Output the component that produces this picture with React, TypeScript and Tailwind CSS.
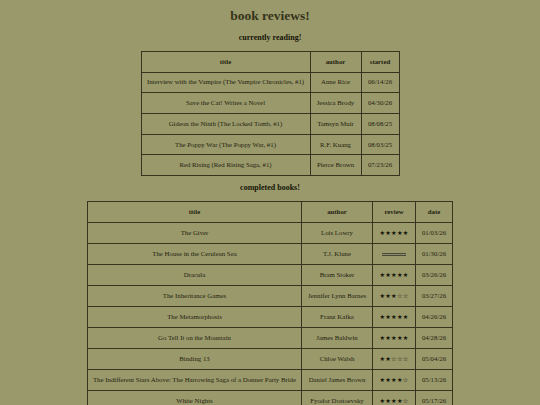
const reading = [
  { title: "Interview with the Vampire (The Vampire Chronicles, #1)", author: "Anne Rice", started: "06/14/26" },
  { title: "Save the Cat! Writes a Novel", author: "Jessica Brody", started: "04/30/26" },
  { title: "Gideon the Ninth (The Locked Tomb, #1)", author: "Tamsyn Muir", started: "08/08/25" },
  { title: "The Poppy War (The Poppy War, #1)", author: "R.F. Kuang", started: "08/03/25" },
  { title: "Red Rising (Red Rising Saga, #1)", author: "Pierce Brown", started: "07/23/26" },
];

const completed = [
  { title: "The Giver", author: "Lois Lowry", stars: 5, date: "01/03/26" },
  { title: "The House in the Cerulean Sea", author: "T.J. Klune", stars: -1, date: "01/30/26" },
  { title: "Dracula", author: "Bram Stoker", stars: 5, date: "03/26/26" },
  { title: "The Inheritance Games", author: "Jennifer Lynn Barnes", stars: 3, date: "03/27/26" },
  { title: "The Metamorphosis", author: "Franz Kafka", stars: 5, date: "04/26/26" },
  { title: "Go Tell It on the Mountain", author: "James Baldwin", stars: 5, date: "04/28/26" },
  { title: "Binding 13", author: "Chloe Walsh", stars: 2, date: "05/04/26" },
  { title: "The Indifferent Stars Above: The Harrowing Saga of a Donner Party Bride", author: "Daniel James Brown", stars: 4, date: "05/13/26" },
  { title: "White Nights", author: "Fyodor Dostoevsky", stars: 4, date: "05/17/26" },
];

const cell = "border border-[#35351f] px-[4px] py-0 text-center align-middle";

function Stars({ n }: { n: number }) {
  if (n < 0) {
    return <div className="mx-auto h-[3px] w-[24px] border-y border-[#4a4a38] bg-[#8d8c6a]" />;
  }
  return (
    <span className="text-[6.2px] tracking-[0.3px] text-[#141408] [font-family:'DejaVu_Sans',sans-serif]">
      {"★".repeat(n)}
      {"☆".repeat(5 - n)}
    </span>
  );
}

export default function App() {
  return (
    <div className="min-h-[405px] w-[540px] bg-[#9a996b] flex flex-col items-center pt-[7px] text-[#24230f] [font-family:'Liberation_Serif',serif]">
      <h1 className="text-[13.5px] leading-[18px] font-bold text-[#35341a]">book reviews!</h1>

      <h2 className="mt-[8px] text-[8px] leading-[10px] font-bold text-[#151408]">currently reading!</h2>
      <table className="mt-[8px] table-fixed border-collapse w-[258px] text-[6.8px]">
        <colgroup>
          <col className="w-[169px]" />
          <col className="w-[51px]" />
          <col className="w-[38px]" />
        </colgroup>
        <thead>
          <tr className="h-[20.7px] font-bold">
            <th className={cell}>title</th>
            <th className={cell}>author</th>
            <th className={cell}>started</th>
          </tr>
        </thead>
        <tbody>
          {reading.map((b) => (
            <tr key={b.title} className="h-[20.7px]">
              <td className={cell}>{b.title}</td>
              <td className={cell}>{b.author}</td>
              <td className={cell}>{b.started}</td>
            </tr>
          ))}
        </tbody>
      </table>

      <h2 className="mt-[7px] text-[8px] leading-[10px] font-bold text-[#151408]">completed books!</h2>
      <table className="mt-[8px] table-fixed border-collapse w-[365px] text-[6.8px]">
        <colgroup>
          <col className="w-[214px]" />
          <col className="w-[71px]" />
          <col className="w-[43px]" />
          <col className="w-[37px]" />
        </colgroup>
        <thead>
          <tr className="h-[21px] font-bold">
            <th className={cell}>title</th>
            <th className={cell}>author</th>
            <th className={cell}>review</th>
            <th className={cell}>date</th>
          </tr>
        </thead>
        <tbody>
          {completed.map((b) => (
            <tr key={b.title} className="h-[21px]">
              <td className={cell}>{b.title}</td>
              <td className={cell}>{b.author}</td>
              <td className={cell}>
                <Stars n={b.stars} />
              </td>
              <td className={cell}>{b.date}</td>
            </tr>
          ))}
        </tbody>
      </table>
    </div>
  );
}
